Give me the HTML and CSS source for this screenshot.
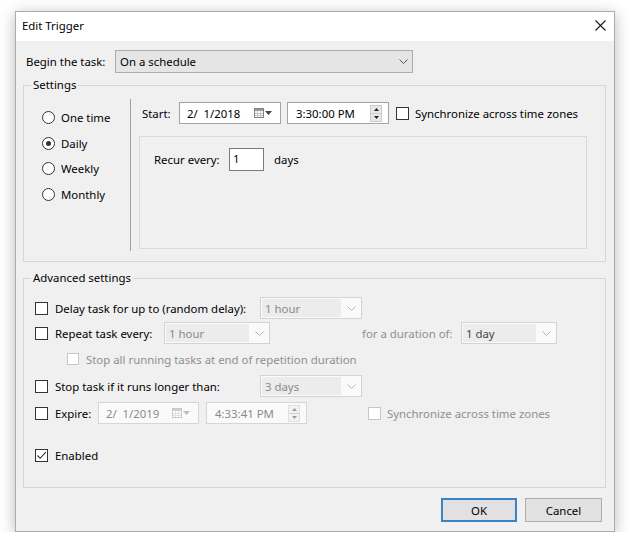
FILE: index.html
```html
<!DOCTYPE html>
<html>
<head>
<meta charset="utf-8">
<title>Edit Trigger</title>
<link rel="stylesheet" href="styles.css">
</head>
<body>
<div class="window">
  <div class="titlebar">
    <span class="title">Edit Trigger</span>
    <svg class="close-icon" width="11" height="11" viewBox="0 0 11 11"><path d="M0.5 0.5L10.5 10.5M10.5 0.5L0.5 10.5" stroke="#1a1a1a" stroke-width="1.1" fill="none"/></svg>
  </div>
  <div class="body">
    <div class="begin-row">
      <span class="begin-label">Begin the task:</span>
      <div class="combo combo-begin">
        <span class="combo-text">On a schedule</span>
        <svg class="chev" width="9" height="5" viewBox="0 0 9 5"><path d="M0.5 0.5L4.5 4.5L8.5 0.5" fill="none" stroke="#555" stroke-width="1"/></svg>
      </div>
    </div>

    <fieldset class="group group-settings">
      <legend class="group-legend">Settings</legend>
      <div class="settings-inner">
        <div class="radios">
          <div class="radio-row"><span class="radio"></span><span>One time</span></div>
          <div class="radio-row"><span class="radio radio-on"></span><span>Daily</span></div>
          <div class="radio-row"><span class="radio"></span><span>Weekly</span></div>
          <div class="radio-row"><span class="radio"></span><span>Monthly</span></div>
        </div>
        <div class="vsep"></div>
        <div class="schedule">
          <div class="start-row">
            <span class="start-label">Start:</span>
            <div class="picker picker-date">
              <span>2/&ensp;1/2018</span>
              <span class="cal">
                <svg width="10" height="10" viewBox="0 0 10 10"><rect x="0.5" y="0.5" width="9" height="9" fill="#fff" stroke="#808080"/><rect x="1" y="1" width="8" height="2" fill="#9a9a9a"/><path d="M1 5.5H9M1 7.5H9M3.5 3V9M6.5 3V9" stroke="#c4c4c4" stroke-width="1"/></svg>
                <svg width="7" height="4" viewBox="0 0 7 4"><path d="M0 0H7L3.5 4Z" fill="#444"/></svg>
              </span>
            </div>
            <div class="picker picker-time">
              <span>3:30:00 PM</span>
              <span class="spin">
                <span class="spin-half"><svg width="5" height="3" viewBox="0 0 5 3"><path d="M0 3H5L2.5 0Z" fill="#222"/></svg></span>
                <span class="spin-half"><svg width="5" height="3" viewBox="0 0 5 3"><path d="M0 0H5L2.5 3Z" fill="#222"/></svg></span>
              </span>
            </div>
            <span class="check check-sync"></span>
            <span>Synchronize across time zones</span>
          </div>
          <div class="panel">
            <div class="recur-row">
              <span class="recur-label">Recur every:</span>
              <div class="textbox">1</div>
              <span class="days">days</span>
            </div>
          </div>
        </div>
      </div>
    </fieldset>

    <fieldset class="group group-advanced">
      <legend class="group-legend">Advanced settings</legend>
      <div class="adv-inner">
        <div class="adv-row">
          <span class="check"></span>
          <span class="lbl lbl-delay">Delay task for up to (random delay):</span>
          <div class="combo combo-dis combo-w102">
            <span class="combo-text">1 hour</span>
            <svg class="chev" width="9" height="5" viewBox="0 0 9 5"><path d="M0.5 0.5L4.5 4.5L8.5 0.5" fill="none" stroke="#b5b5b5" stroke-width="1"/></svg>
          </div>
        </div>
        <div class="adv-row row-2">
          <span class="check"></span>
          <span class="lbl lbl-repeat">Repeat task every:</span>
          <div class="combo combo-dis combo-w106">
            <span class="combo-text">1 hour</span>
            <svg class="chev" width="9" height="5" viewBox="0 0 9 5"><path d="M0.5 0.5L4.5 4.5L8.5 0.5" fill="none" stroke="#b5b5b5" stroke-width="1"/></svg>
          </div>
          <span class="lbl-dis lbl-duration">for a duration of:</span>
          <div class="combo combo-dis combo-w96">
            <span class="combo-text combo-text-dark">1 day</span>
            <svg class="chev" width="9" height="5" viewBox="0 0 9 5"><path d="M0.5 0.5L4.5 4.5L8.5 0.5" fill="none" stroke="#b5b5b5" stroke-width="1"/></svg>
          </div>
        </div>
        <div class="adv-row row-3">
          <span class="check check-dis check-indent"></span>
          <span class="lbl-dis">Stop all running tasks at end of repetition duration</span>
        </div>
        <div class="adv-row row-4">
          <span class="check"></span>
          <span class="lbl lbl-delay">Stop task if it runs longer than:</span>
          <div class="combo combo-dis combo-w102">
            <span class="combo-text">3 days</span>
            <svg class="chev" width="9" height="5" viewBox="0 0 9 5"><path d="M0.5 0.5L4.5 4.5L8.5 0.5" fill="none" stroke="#b5b5b5" stroke-width="1"/></svg>
          </div>
        </div>
        <div class="adv-row row-5">
          <span class="check"></span>
          <span class="lbl lbl-expire">Expire:</span>
          <div class="picker picker-dis picker-w101 picker-date">
            <span>2/&ensp;1/2019</span>
            <span class="cal">
              <svg width="10" height="10" viewBox="0 0 10 10"><rect x="0.5" y="0.5" width="9" height="9" fill="#fff" stroke="#c8c8c8"/><rect x="1" y="1" width="8" height="2" fill="#d0d0d0"/><path d="M1 5.5H9M1 7.5H9M3.5 3V9M6.5 3V9" stroke="#e0e0e0" stroke-width="1"/></svg>
              <svg width="7" height="4" viewBox="0 0 7 4"><path d="M0 0H7L3.5 4Z" fill="#bdbdbd"/></svg>
            </span>
          </div>
          <div class="picker picker-dis picker-w101 picker-time">
            <span>4:33:41 PM</span>
            <span class="spin spin-dis">
              <span class="spin-half"><svg width="5" height="3" viewBox="0 0 5 3"><path d="M0 3H5L2.5 0Z" fill="#9a9a9a"/></svg></span>
              <span class="spin-half"><svg width="5" height="3" viewBox="0 0 5 3"><path d="M0 0H5L2.5 3Z" fill="#9a9a9a"/></svg></span>
            </span>
          </div>
          <span class="check check-dis check-sync2"></span>
          <span class="lbl-dis">Synchronize across time zones</span>
        </div>
        <div class="adv-row row-6">
          <span class="check check-on">
            <svg width="11" height="11" viewBox="0 0 11 11"><path d="M1.5 5.5L4.2 8.3L9.8 2.2" fill="none" stroke="#333" stroke-width="1.1"/></svg>
          </span>
          <span class="lbl">Enabled</span>
        </div>
      </div>
    </fieldset>

    <div class="buttons">
      <div class="btn btn-ok">OK</div>
      <div class="btn btn-cancel">Cancel</div>
    </div>
  </div>
</div>
</body>
</html>
```

FILE: styles.css
```css
* { box-sizing: border-box; }

body {
  margin: 0;
  background: #ffffff;
  font-family: "Noto Sans", "Open Sans", sans-serif;
  font-size: 11.4px;
  color: #000;
}

.window {
  margin: 11px 0 0 15px;
  width: 600px;
  height: 521px;
  border: 1px solid #acacac;
  background: #f0f0f0;
  box-shadow: 0 3px 14px rgba(0, 0, 0, 0.28);
  display: flex;
  flex-direction: column;
}

.titlebar {
  height: 29px;
  background: #fff;
  display: flex;
  align-items: center;
  justify-content: space-between;
  padding: 0 8px 3px 6px;
  flex: none;
}

.body {
  display: flex;
  flex-direction: column;
  padding-top: 9px;
}

.begin-row {
  display: flex;
  align-items: center;
  height: 23px;
  padding-left: 10px;
}

.begin-label { width: 89px; }

.combo {
  display: flex;
  align-items: center;
  height: 22px;
  border: 1px solid #adadad;
}

.combo-begin {
  width: 298px;
  height: 23px;
  background: #e5e5e5;
  padding: 0 4px 0 4px;
  justify-content: space-between;
}

.combo-dis {
  background: #fafafa;
  border-color: #d3d3d3;
  padding: 1px 5px 1px 1px;
  color: #8a8a8a;
}

.combo-dis .combo-text {
  flex: 1;
  align-self: stretch;
  background: #ececec;
  display: flex;
  align-items: center;
  padding-left: 3px;
  margin-right: 6px;
}

.combo-text-dark { color: #474747; }

.combo-w102 { width: 102px; }
.combo-w106 { width: 106px; }
.combo-w96 { width: 96px; }

.chev { flex: none; }

/* group boxes */
.group {
  margin: 4px 0 0 7px;
  width: 583px;
  border: 1px solid #d6d6d6;
  padding: 0;
  min-width: 0;
}

.group-legend {
  margin-left: 7px;
  padding: 0 2px;
  line-height: 16px;
}

.group-advanced { margin-top: 8px; }

.settings-inner {
  display: flex;
  padding: 6px 0 10px 0;
  height: 168px;
}

.radios {
  width: 106px;
  padding: 6px 0 0 18px;
  display: flex;
  flex-direction: column;
}

.radio-row {
  height: 25.5px;
  display: flex;
  align-items: center;
  gap: 6px;
}

.radio {
  width: 13px;
  height: 13px;
  border-radius: 50%;
  border: 1px solid #333;
  background: #fff;
  display: flex;
  align-items: center;
  justify-content: center;
}

.radio-on::after {
  content: "";
  width: 5px;
  height: 5px;
  border-radius: 50%;
  background: #333;
}

.vsep {
  width: 1px;
  background: #a0a0a0;
}

.schedule {
  flex: 1;
  display: flex;
  flex-direction: column;
  padding-top: 3px;
}

.start-row {
  display: flex;
  align-items: center;
  height: 22px;
  padding-left: 11px;
}

.start-label { width: 37px; }

.picker {
  height: 22px;
  width: 102px;
  border: 1px solid #a3a3a3;
  background: #fff;
  display: flex;
  align-items: center;
  justify-content: space-between;
}

.picker-date { padding: 0 8px 0 7px; }

.picker-time {
  margin-left: 6px;
  padding: 0 6px 0 8px;
}

.picker-dis {
  border-color: #d6d6d6;
  background: #fafafa;
  color: #8a8a8a;
}

.picker-w101 { width: 101px; }

.cal {
  display: flex;
  align-items: center;
  gap: 1px;
}

.spin {
  width: 12px;
  height: 17px;
  display: flex;
  flex-direction: column;
  border: 1px solid #c9c9c9;
  background: #e8e8e8;
}

.spin-dis {
  border-color: #e0e0e0;
  background: #f2f2f2;
}

.spin-half {
  flex: 1;
  display: flex;
  align-items: center;
  justify-content: center;
}

.spin-half + .spin-half { border-top: 1px solid #d0d0d0; }

.check {
  width: 13px;
  height: 13px;
  border: 1px solid #333;
  background: #fff;
  flex: none;
  display: flex;
  align-items: center;
  justify-content: center;
  margin-right: 7px;
}

.check-sync { margin: 0 6px 0 7px; }

.check-dis { border-color: #c6c6c6; }

.check-indent {
  margin-left: 32px;
  width: 12px;
  height: 12px;
}

.check-sync2 { margin-left: 61px; margin-right: 6px; }

.panel {
  margin: 12px 0 0 8px;
  width: 448px;
  height: 113px;
  border: 1px solid #dadada;
  padding: 11px 0 0 14px;
}

.recur-row {
  display: flex;
  align-items: center;
}

.recur-label { width: 75px; }

.textbox {
  width: 35px;
  height: 23px;
  border: 1px solid #7a7a7a;
  background: #fff;
  padding: 1px 0 0 3px;
  line-height: 17px;
}

.days { margin-left: 10px; }

/* advanced */
.adv-inner {
  display: flex;
  flex-direction: column;
  padding: 11px 0 21px 11px;
}

.adv-row {
  display: flex;
  align-items: center;
  height: 22px;
}

.row-2 { margin-top: 3px; }
.row-3 { margin-top: 4px; }
.row-4 { margin-top: 5px; }
.row-5 { margin-top: 5px; }
.row-6 { margin-top: 20px; }

.lbl-delay { width: 205px; }
.lbl-repeat { width: 109px; }
.lbl-expire { width: 43px; }

.lbl-dis { color: #8f8f8f; }

.lbl-duration {
  margin-left: 92px;
  width: 99px;
}

.row-5 .picker-time { margin-left: 7px; }

/* buttons */
.buttons {
  display: flex;
  justify-content: flex-end;
  gap: 8px;
  padding-right: 12px;
  margin-top: 10px;
}

.btn {
  width: 76px;
  height: 24px;
  background: #e1e1e1;
  border: 1px solid #adadad;
  display: flex;
  align-items: center;
  justify-content: center;
}

.btn-cancel { width: 77px; }

.btn-ok {
  border: 2px solid #3a83c6;
}
```
